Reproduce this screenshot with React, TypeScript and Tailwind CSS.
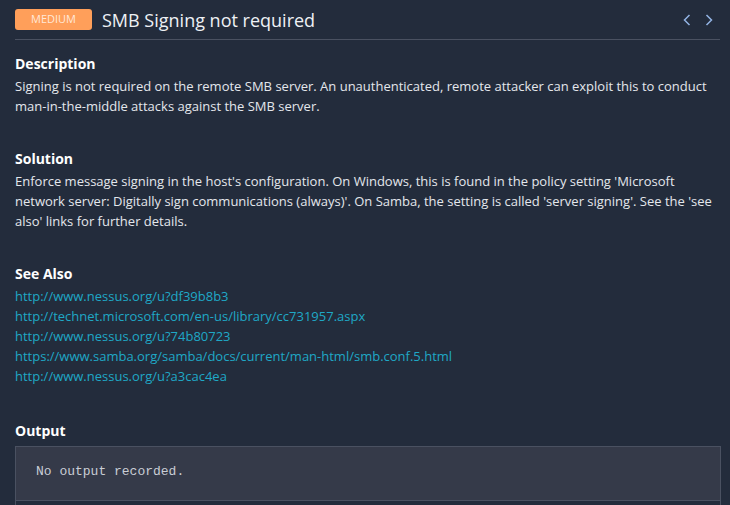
const SEE_ALSO = [
  "http://www.nessus.org/u?df39b8b3",
  "http://technet.microsoft.com/en-us/library/cc731957.aspx",
  "http://www.nessus.org/u?74b80723",
  "https://www.samba.org/samba/docs/current/man-html/smb.conf.5.html",
  "http://www.nessus.org/u?a3cac4ea",
];

const Section = ({
  title,
  children,
}: {
  title: string;
  children: React.ReactNode;
}) => (
  <section className="mb-[33px]">
    <h2 className="text-[14px] leading-5 font-bold text-white mb-0.5">
      {title}
    </h2>
    <div className="text-[13px] leading-5 text-[#e4e7ec]">{children}</div>
  </section>
);

const App = () => {
  return (
    <div
      className="h-[505px] bg-[#232c3c] pl-[15px] pr-[9px] overflow-hidden"
      style={{ fontFamily: '"Open Sans", "Liberation Sans", sans-serif' }}
    >
      <header className="h-10 flex items-center border-b border-[#4a5161] mr-px">
        <span className="w-[77px] h-[21px] rounded-[3px] bg-[#ff9f5a] text-[#ffe8d8] text-[11px] flex items-center justify-center uppercase">
          Medium
        </span>
        <h1 className="ml-[10px] text-[18px] text-[#eef1f5] leading-6">
          SMB Signing not required
        </h1>
        <div className="ml-auto flex items-center gap-[14px] mr-[7px]">
          <svg width="8" height="12" viewBox="0 0 8 12" fill="none">
            <path
              d="M6.5 1 L1.5 6 L6.5 11"
              stroke="#93b4e4"
              strokeWidth="1.5"
            />
          </svg>
          <svg width="8" height="12" viewBox="0 0 8 12" fill="none">
            <path
              d="M1.5 1 L6.5 6 L1.5 11"
              stroke="#93b4e4"
              strokeWidth="1.5"
            />
          </svg>
        </div>
      </header>

      <div className="pt-[14px]">
        <Section title="Description">
          <p>
            Signing is not required on the remote SMB server. An
            unauthenticated, remote attacker can exploit this to conduct
            man-in-the-middle attacks against the SMB server.
          </p>
        </Section>

        <Section title="Solution">
          <p>
            Enforce message signing in the host's configuration. On Windows,
            this is found in the policy setting 'Microsoft network server:
            Digitally sign communications (always)'. On Samba, the setting is
            called 'server signing'. See the 'see also' links for further
            details.
          </p>
        </Section>

        <Section title="See Also">
          <ul>
            {SEE_ALSO.map((url) => (
              <li key={url}>
                <a href={url} className="text-[#1fa8c6]">
                  {url}
                </a>
              </li>
            ))}
          </ul>
        </Section>

        <section className="mt-[35px]">
          <h2 className="text-[14px] leading-5 font-bold text-white mb-[5px]">
            Output
          </h2>
          <div className="border border-[#4a5161]">
            <pre
              className="bg-[#353a49] border-b border-[#4a5161] h-[54px] pl-5 pt-[15px] text-[13px] leading-5 text-[#c9cdd5]"
              style={{ fontFamily: '"Liberation Mono", monospace' }}
            >
              No output recorded.
            </pre>
            <div className="h-12" />
          </div>
        </section>
      </div>
    </div>
  );
};

export default App;
